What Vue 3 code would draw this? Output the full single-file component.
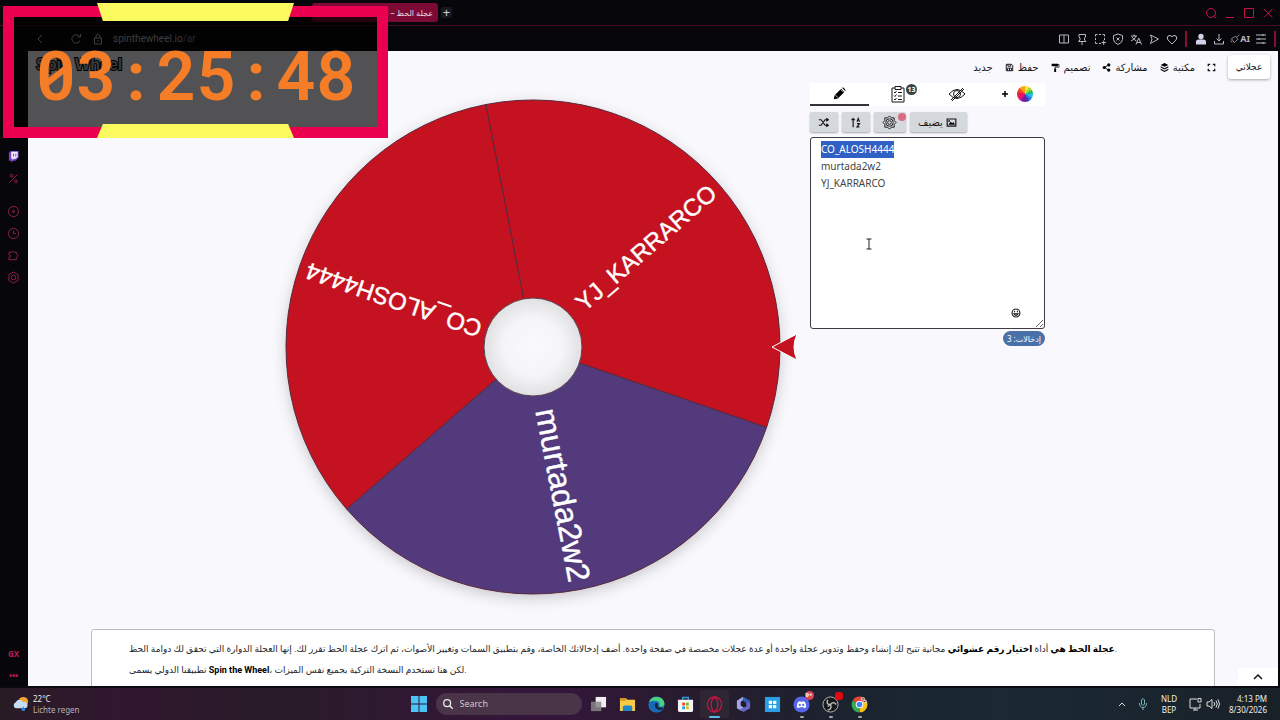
<script setup>
import { ref, onMounted } from 'vue'

const entries = ref('CO_ALOSH4444\nmurtada2w2\nYJ_KARRARCO')
const box = ref(null)
onMounted(() => {
  box.value.focus()
  box.value.setSelectionRange(0, 12)
})

const slices = [
  { name: 'YJ_KARRARCO', angle: -41, size: 24, color: '#c41220' },
  { name: 'murtada2w2', angle: 79, size: 32, color: '#523a7c' },
  { name: 'CO_ALOSH4444', angle: 199, size: 24, color: '#c41220' },
]
const R = 247
const point = (deg) => {
  const a = (deg * Math.PI) / 180
  return `${(R * Math.cos(a)).toFixed(2)} ${(R * Math.sin(a)).toFixed(2)}`
}
const slicePath = (mid) => `M0 0L${point(mid - 60)}A${R} ${R} 0 0 1 ${point(mid + 60)}Z`

const clock = '03:25:48'.split('')

const windowButtons = [
  { name: 'Search tabs', d: 'M11.5 7A4.5 4.5 0 1 1 7 2.500A4.5 4.5 0 0 1 11.5 7ZM9.5 10L12 12' },
  { name: 'Minimize', d: 'M3 11.500H11' },
  { name: 'Maximize', d: 'M2.500 2.500H11.500V11.500H2.500Z' },
  { name: 'Close', d: 'M3 3L11.500 11.500M11.500 3L3 11.500' },
]
const tools = [
  { name: 'Split view', d: 'M2.500 3H11.500V11H2.500ZM7 3V11' },
  { name: 'Pin', d: 'M4 2.500H10.500V5L9.500 6V8L11 9.500H3.500L5 8V6L4 5ZM7 9.500V13' },
  { name: 'Snapshot', d: 'M2.500 4.500V2.500H4.500M6 2.500H8M9.500 2.500H11.500V4.500M11.500 6V8M8 11.500H6M4.500 11.500H2.500V9.500M2.500 8V6M8.500 10.500H13M10.700 8.500V13' },
  { name: 'Ad blocker', d: 'M7 2L11.500 3.500V7.500Q11.500 10.500 7 12.500Q2.500 10.500 2.500 7.500V3.500ZM5.500 5.500L8.500 8.500M8.500 5.500L5.500 8.500' },
  { name: 'Translate', d: 'M2 4H8M5 2.500V4M3 5Q5 8 7.500 9M7 4Q6 7.500 2 9M7 12.500L9.700 6L12.500 12.500M8 10.500H11.500' },
  { name: 'Player', d: 'M3.500 3L11.500 7L3.500 11.500L5 7Z' },
  { name: 'Favourite', d: 'M7 12L3 8Q1.500 6 3 4Q5 2.500 7 4.700Q9 2.500 11 4Q12.500 6 11 8Z' },
]
const sideTop = [
  { name: 'Limiter', d: 'M3 11L11 3M3.500 4A1.500 1.500 0 1 0 6.500 4A1.500 1.500 0 1 0 3.500 4M8 10A1.500 1.500 0 1 0 11 10A1.500 1.500 0 1 0 8 10' },
]
const sideMain = [
  { name: 'Player', d: 'M12.500 7A5.500 5.500 0 1 1 1.500 7A5.500 5.500 0 1 1 12.500 7M6.500 5.500L8.500 7L6.500 8.500Z' },
  { name: 'History', d: 'M12.500 7A5.500 5.500 0 1 1 1.500 7A5.500 5.500 0 1 1 12.500 7M7 3.500V7H9.500' },
  { name: 'Extensions', d: 'M2 3.500H5Q6 1 8 3.500H10V5.500Q14 7 10 9V11.500H2V9Q6 7.500 2 6Z' },
  { name: 'Settings', d: 'M7 1L12 4V10L7 13L2 10V4ZM9.500 7A2.500 2.500 0 1 1 4.500 7A2.500 2.500 0 1 1 9.500 7' },
]
</script>

<template>
  <div class="desktop">
    <header class="browser">
      <div class="tabs-row">
        <div class="tab" dir="rtl">عجلة الحظ – أداة</div>
        <button class="new-tab" aria-label="New tab">+</button>
        <div class="window-buttons">
          <button v-for="b in windowButtons" :key="b.name" :aria-label="b.name">
            <svg viewBox="0 0 14 14"><path :d="b.d" /></svg>
          </button>
        </div>
      </div>
      <div class="address-row">
        <button class="dim" aria-label="Back"><svg viewBox="0 0 14 14"><path d="M9 3L5 7L9 11" /></svg></button>
        <span class="spacer-sm"></span>
        <button class="dim" aria-label="Reload"><svg viewBox="0 0 14 14"><path d="M11 8.500A4.200 4.200 0 1 1 10.500 4.500M11.500 2V5H8.500" /></svg></button>
        <button class="dim" aria-label="Site information"><svg viewBox="0 0 14 14"><path d="M3.500 6H10.500V12H3.500ZM5 6V4Q7 0 9 4V6M7 8V10" /></svg></button>
        <span class="url">spinthewheel.io<i>/ar</i></span>
        <div class="tools">
          <button v-for="t in tools" :key="t.name" :aria-label="t.name">
            <svg viewBox="0 0 14 14"><path :d="t.d" /></svg>
          </button>
          <span class="bar"></span>
          <button class="wide" aria-label="Profile"><svg viewBox="0 0 14 14"><path class="solid" d="M2 12.500V9.500Q2 7.500 4.500 7.500H9.500Q12 7.500 12 9.500V12.500ZM9.700 4.500A2.700 2.700 0 1 1 4.300 4.500A2.700 2.700 0 1 1 9.700 4.500" /></svg></button>
          <button aria-label="Downloads"><svg viewBox="0 0 14 14"><path d="M7 2V9M4.500 6.500L7 9L9.500 6.500M2.500 9V12H11.500V9" /></svg></button>
          <button class="ai" aria-label="AI"><svg viewBox="0 0 14 14"><path d="M8 3L2 6.500L6 12L11 7.500ZM10 4L13 1M1 9L3 12" /></svg>AI</button>
          <button aria-label="Easy setup"><svg viewBox="0 0 14 14"><path d="M2 3H12M2 7H12M2 11H12M9 2V4M5 6V8M9 10V12" /></svg></button>
          <span class="bar"></span>
        </div>
      </div>
    </header>

    <div class="middle">
      <aside class="side">
        <button aria-label="Twitch">
          <svg viewBox="0 0 14 14"><path class="tw" d="M2 3L4 1H12.500V8L9 11.500H7L4.500 13.500V11.500H2Z" /><path class="tw-in" d="M4.500 2H11.500V7.500L9.500 9.500H7.500L6 11V9.500H4.500Z" /><path class="tw-eye" d="M7 4V7M9.500 4V7" /></svg>
        </button>
        <button v-for="s in sideTop" :key="s.name" :aria-label="s.name"><svg viewBox="0 0 14 14"><path :d="s.d" /></svg></button>
        <span class="side-gap"></span>
        <button v-for="s in sideMain" :key="s.name" :aria-label="s.name"><svg viewBox="0 0 14 14"><path :d="s.d" /></svg></button>
        <span class="push"></span>
        <button class="gx">GX</button>
        <button class="gx">•••</button>
      </aside>

      <div class="page">
        <nav class="site-nav">
          <a href="#" class="logo">Spin Wheel</a>
          <div class="links">
            <a href="#">جديد</a>
            <a href="#"><svg viewBox="0 0 14 14"><path class="line2" d="M2 2H10L12 4V12H2ZM4.500 2V5H9V2M4 12V8H10V12M7 8V12" /></svg>حفظ</a>
            <a href="#"><svg viewBox="0 0 14 14"><path d="M1 1H11V2H13V7H7V9H8V14H5V8H6V6H12V3H11V5H1Z" /></svg>تصميم</a>
            <a href="#"><svg viewBox="0 0 14 14"><path class="line2" d="M10 3L4 7L10 11" /><circle cx="10.500" cy="3" r="2.500" /><circle cx="3.500" cy="7" r="2.500" /><circle cx="10.500" cy="11" r="2.500" /></svg>مشاركة</a>
            <a href="#"><svg viewBox="0 0 14 14"><path d="M7 0L13 3L7 6L1 3ZM1 5L7 8L13 5V7L7 10L1 7ZM1 9L7 12L13 9V11L7 14L1 11Z" /></svg>مكتبة</a>
            <a href="#" aria-label="Full screen"><svg viewBox="0 0 14 14"><path class="thick" d="M2 5V2H5M9 2H12V5M12 9V12H9M5 12H2V9" /></svg></a>
            <button class="mine">عجلاتي</button>
          </div>
        </nav>

        <main class="stage">
          <svg class="wheel" viewBox="-265 -264 530 530" role="img" aria-label="Wheel">
            <defs>
              <radialGradient id="hub" cx="50%" cy="50%" r="50%">
                <stop offset="0" stop-color="#fafafc" />
                <stop offset="0.6" stop-color="#f5f5f7" />
                <stop offset="1" stop-color="#e0e0e3" />
              </radialGradient>
              <filter id="soft" x="-10%" y="-10%" width="120%" height="120%"><feGaussianBlur stdDeviation="8" /></filter>
            </defs>
            <circle r="246" cy="4" fill="#000" opacity="0.22" filter="url(#soft)" />
            <path v-for="s in slices" :key="s.angle" :d="slicePath(s.angle)" :fill="s.color" stroke="#5a2a3c" stroke-width="1" />
            <text v-for="s in slices" :key="s.name" class="slice-name" x="239" :y="s.size * 0.31" :font-size="s.size" :transform="`rotate(${s.angle})`">{{ s.name }}</text>
            <circle r="49" fill="url(#hub)" stroke="#57434c" />
            <path d="M239 0L264 -13Q258 0 264 13Z" fill="#c41220" stroke="#fff" stroke-width="1" />
          </svg>

          <section class="panel">
            <div class="tabs">
              <button class="on" aria-label="Entries"><svg class="big" viewBox="0 0 16 16"><path d="M1 15L2 10L10 2L14 6L6 14ZM11 1Q12 0 13 1L15 3Q16 4 15 5Z" /><path class="cut" d="M9.500 3L13 6.500M3 10L6 13" /></svg></button>
              <button aria-label="Results">
                <span class="holder"><svg class="tall" viewBox="0 0 16 18"><path class="line" d="M5 3H2V17H14V3H11M5 1.500H11V4.500H5ZM4 7L5 8L6.500 6M8 7.500H12M4 10.500L5 11.500L6.500 9.500M8 11H12M4 14L5 15L6.500 13M8 14.500H12" /></svg><b class="count">13</b></span>
              </button>
              <button aria-label="Hide"><svg class="eye" viewBox="0 0 18 16"><path class="line" d="M1 8Q9 -1 17 8Q9 17 1 8ZM12.500 8A3.500 3.500 0 1 1 5.500 8A3.500 3.500 0 1 1 12.500 8M3 14L15 2M4 15L16 3" /></svg></button>
              <button class="add" aria-label="Add wheel">
                <svg viewBox="0 0 14 14"><path class="plus" d="M7 4V10M4 7H10" /></svg>
                <i class="rainbow"></i>
              </button>
            </div>

            <div class="actions">
              <button aria-label="Shuffle"><svg viewBox="0 0 14 14"><path class="line2" d="M1 3.500H4L9 10.500H12M1 10.500H4L9 3.500H12M10.500 1.500L13 3.500L10.500 5.500M10.500 8.500L13 10.500L10.500 12.500" /></svg></button>
              <button aria-label="Sort"><svg viewBox="0 0 14 14"><path class="line2" d="M4 13V2M2 4L4 2L6 4M9 6L10.500 2L12 6M9 8.500H12L9 12.500H12" /></svg></button>
              <button class="gear" aria-label="Advanced"><svg viewBox="0 0 16 16"><path class="line" d="M8 1L10 3L13 3V6L15 8L13 10V13H10L8 15L6 13H3V10L1 8L3 6V3H6ZM12 8A4 4 0 1 1 4 8A4 4 0 1 1 12 8M10 8A2 2 0 1 1 6 8A2 2 0 1 1 10 8" /></svg><i class="dot"></i></button>
              <button class="image">يضيف<svg viewBox="0 0 14 14"><path class="line2" d="M1.500 2.500H12.500V11.500H1.500Z" /><path d="M3 10L6 6L8 8L9.500 6.500L11.500 10ZM3 4H5V6H3Z" /></svg></button>
            </div>

            <div class="entry-box">
              <textarea ref="box" v-model="entries" aria-label="Entries" spellcheck="false"></textarea>
              <button class="emoji" aria-label="Emoji"><svg viewBox="0 0 14 14"><path class="line2" d="M12.500 7A5.500 5.500 0 1 1 1.500 7A5.500 5.500 0 1 1 12.500 7M4 8Q7 12.500 10 8ZM5 4V6M9 4V6" /></svg></button>
              <svg class="ibeam" viewBox="0 0 8 12"><path d="M1.500 1H6.500M4 1V11M1.500 11H6.500" /></svg>
            </div>
            <span class="total" dir="rtl">إدخالات: 3</span>
          </section>
        </main>

        <article class="info">
          <p><b>عجلة الحظ هي</b> أداة <b>اختيار رقم عشوائي</b> مجانية تتيح لك إنشاء وحفظ وتدوير عجلة واحدة أو عدة عجلات مخصصة في صفحة واحدة. أضف إدخالاتك الخاصة، وقم بتطبيق السمات وتغيير الأصوات، ثم اترك عجلة الحظ تقرر لك. إنها العجلة الدوارة التي تحقق لك دوامة الحظ.</p>
          <p>تطبيقنا الدولي يسمى <b class="latin">Spin the Wheel</b>، لكن هنا تستخدم النسخة التركية بجميع نفس الميزات.</p>
        </article>
        <button class="to-top" aria-label="Back to top"><svg viewBox="0 0 14 14"><path class="line2" d="M3 9L7 5L11 9" /></svg></button>
      </div>
    </div>

    <footer class="taskbar">
      <div class="weather">
        <svg viewBox="0 0 18 18"><circle cx="12" cy="6" r="5" fill="#f5a52b" /><path d="M4 13A3.500 3.500 0 0 1 4 6.500A4.500 4.500 0 0 1 12 6.500A3.400 3.400 0 0 1 14 13Z" fill="#c9dcf5" /><path d="M12 11L14 14A2 2 0 1 1 10 14Z" fill="#2d86dd" /></svg>
        <div><div>22°C</div><div class="muted">Lichte regen</div></div>
      </div>

      <div class="dock">
        <button class="start" aria-label="Start"><svg viewBox="0 0 16 16"><path fill="#4cc4f5" d="M0 0H7.500V7.500H0ZM8.500 0H16V7.500H8.500ZM0 8.500H7.500V16H0ZM8.500 8.500H16V16H8.500Z" /></svg></button>
        <label class="search"><svg viewBox="0 0 14 14"><circle cx="6" cy="6" r="4" /><path d="M9 9L12.500 12.500" /></svg><input type="text" placeholder="Search" aria-label="Search" /></label>
        <button class="app" aria-label="Task view"><svg viewBox="0 0 18 18"><rect x="6" y="1" width="11" height="11" fill="#f1eef2" /><rect x="1" y="6" width="11" height="10" fill="#88858a" opacity="0.85" /></svg></button>
        <button class="app" aria-label="Files"><svg viewBox="0 0 18 18"><path d="M1 2H7L9 4H17V16H1Z" fill="#f8cb46" /><path d="M1 2H7L8 5H1Z" fill="#d99520" /><path d="M4 16V12Q4 10 6 10H12Q14 10 14 12V16Z" fill="#2386c8" /></svg></button>
        <button class="app" aria-label="Edge"><svg viewBox="0 0 18 18"><circle cx="9" cy="9" r="8.500" fill="#168ad3" /><path d="M1 7A8.500 8.500 0 0 1 17.500 8Q17 12 12 11Q14 6 9 5Q4 4 1 7Z" fill="#4bd37b" /><path d="M1 7Q6 4 10 7Q6 8 7 12Q8 16 14 15Q9 19 4 15Q1 12 1 7Z" fill="#1766b7" /><path d="M9 7Q12 8 10.500 11Q13 13 16.500 11.500L15 15Q7 15 7 10Q7 8 9 7Z" fill="#1c2740" /></svg></button>
        <button class="app" aria-label="Store"><svg viewBox="0 0 18 18"><path d="M6 4V1.500H12V4" fill="none" stroke="#2d9cdb" stroke-width="1.500" /><path d="M1 4H17V15Q17 17 15 17H3Q1 17 1 15Z" fill="#f5f5f5" /><path d="M5.500 7H8.500V10H5.500Z" fill="#ed4b28" /><path d="M9.500 7H12.500V10H9.500Z" fill="#79b51c" /><path d="M5.500 11H8.500V14H5.500Z" fill="#1ca6ea" /><path d="M9.500 11H12.500V14H9.500Z" fill="#f8b71b" /></svg></button>
        <button class="app active" aria-label="Opera GX"><svg viewBox="0 0 18 18"><ellipse cx="9" cy="9" rx="7.500" ry="8" fill="none" stroke="#d01347" stroke-width="1.300" /><ellipse cx="9" cy="9" rx="3.500" ry="7" fill="none" stroke="#d01347" stroke-width="1.300" /></svg></button>
        <button class="app" aria-label="Microsoft 365"><svg viewBox="0 0 18 18"><path d="M8 1L2 5V13L7 16L10 13L6 10V6L11 3Z" fill="#a4a5e5" /><path d="M9 1L16 5V9L11 7L8 4Z" fill="#345eb8" /><path d="M16 8V13L9 17L5 14L12 11V7Z" fill="#6a65ca" /></svg></button>
        <button class="app" aria-label="Windows app"><svg viewBox="0 0 18 18"><rect x="1" y="1" width="16" height="16" fill="#2aa0e3" /><path d="M5 5H8.500V8.500H5ZM9.500 5H13V8.500H9.500ZM5 9.500H8.500V13H5ZM9.500 9.500H13V13H9.500Z" fill="#eef8fe" /></svg></button>
        <button class="app run" aria-label="Discord"><svg viewBox="0 0 18 18"><circle cx="9" cy="9" r="8.500" fill="#5865e8" /><path d="M4 12Q4 8 5.500 6L8 5.500L8.500 6.300H9.500L10 5.500L12.500 6Q14 8 14 12L12 13L11 12H7L6 13Z" fill="#fff" /><circle cx="7.200" cy="9.500" r="1.200" fill="#5865e8" /><circle cx="10.800" cy="9.500" r="1.200" fill="#5865e8" /></svg><b class="badge">9+</b></button>
        <button class="app run" aria-label="OBS"><svg viewBox="0 0 18 18"><circle cx="9" cy="9" r="8" fill="#171819" stroke="#bcbdc0" /><path d="M9 9Q4 9 6 4M9 9Q12 5 15 9M9 9Q11 14 6 15M9 9L6 11" fill="none" stroke="#bcbdc0" stroke-width="1.500" /></svg><i class="rec"></i></button>
        <button class="app run" aria-label="Chrome"><svg viewBox="0 0 18 18"><path d="M9 9L1.800 4.800A8.300 8.300 0 0 1 16.200 4.800Z" fill="#ea4335" /><path d="M9 9L16.200 4.800A8.300 8.300 0 0 1 9 17.300Z" fill="#fbc116" /><path d="M9 9V17.300A8.300 8.300 0 0 1 1.800 4.800Z" fill="#34a853" /><circle cx="9" cy="9" r="4" fill="#fff" /><circle cx="9" cy="9" r="3" fill="#4285f4" /><path d="M11 2H14V5H16V7H13V4H11Z" fill="#222938" stroke="#fff" stroke-width="0.800" /></svg></button>
      </div>

      <div class="tray">
        <svg viewBox="0 0 14 14"><path d="M4 9L7 6L10 9" /></svg>
        <svg class="mic" viewBox="0 0 14 14"><path d="M5.500 3Q7 0 8.500 3V7Q7 10 5.500 7ZM3.500 6Q3.500 10.500 7 10.500Q10.500 10.500 10.500 6M7 10.500V13" /></svg>
        <div class="lang"><div>NLD</div><div>BEP</div></div>
        <svg viewBox="0 0 14 14"><path d="M9 2H2V11H12V7M10 1.500H13V5H10ZM5 13H10M7 11V13" /></svg>
        <svg class="vol" viewBox="0 0 14 14"><path d="M1 5H3L6 2.500V11.500L3 9H1ZM8 5Q9.500 7 8 9M10 3.500Q12.500 7 10 10.500M12 2.500Q15 7 12 11.500" /></svg>
        <div class="when"><div>4:13 PM</div><div>8/30/2026</div></div>
      </div>
    </footer>

    <div class="timer" role="timer">
      <i class="clip top"></i>
      <i class="clip bottom"></i>
      <div class="digits"><span v-for="(c, i) in clock" :key="i" :class="{ zero: c === '0', colon: c === ':' }">{{ c }}</span></div>
    </div>
  </div>
</template>

<style>
body { margin: 0; background: #07070b; }
</style>

<style scoped>
* { box-sizing: border-box; }
.desktop { position: relative; display: flex; flex-direction: column; height: 100vh; overflow: hidden; background: #07070b; font-family: "Noto Sans", "DejaVu Sans", sans-serif; }
button { display: flex; align-items: center; justify-content: center; padding: 0; border: 0; background: none; color: inherit; font: inherit; }
a { color: inherit; text-decoration: none; }
svg { width: 14px; height: 14px; flex: none; }

.browser { flex: none; color: #b9b7c2; }
.tabs-row { display: flex; align-items: center; height: 26px; padding-left: 312px; border-bottom: 1px solid #4c0a25; }
.tab { width: 126px; height: 19px; padding: 0 5px; border-radius: 3px; background: #7d0935; color: #eadbe1; font-size: 8px; line-height: 19px; white-space: nowrap; overflow: hidden; }
.new-tab { width: 11px; height: 11px; margin-left: 3px; border-radius: 2px; background: #181722; color: #cfcddb; font-size: 13px; line-height: 11px; }
.window-buttons { display: flex; gap: 5px; margin-left: auto; margin-right: 5px; }
.window-buttons path { fill: none; stroke: #c51349; stroke-width: 1; }
.address-row { display: flex; align-items: center; height: 25px; padding-left: 33px; padding-right: 4px; }
.address-row path { fill: none; stroke: #b9b7c2; stroke-width: 1; }
.address-row .solid { fill: #d3d0e8; stroke: none; }
.dim { width: 14px; margin-right: 8px; }
.spacer-sm { width: 14px; }
.url { color: #b5b5b8; font-family: Roboto, sans-serif; font-size: 10px; }
.url i { color: #77777b; font-style: normal; }
.tools { display: flex; align-items: center; gap: 4px; margin-left: auto; }
.bar { width: 2px; height: 16px; margin-left: 2px; background: #8b0c37; }
.tools .wide { margin-left: 3px; }
.ai { font-size: 9px; font-weight: 700; }
.ai svg { width: 10px; height: 10px; }

.middle { display: flex; flex: 1; min-height: 0; padding-right: 2px; }
.side { display: flex; flex: none; flex-direction: column; align-items: center; width: 28px; padding-top: 94px; padding-right: 1px; }
.side button { height: 22px; }
.side path { fill: none; stroke: #982049; stroke-width: 1; }
.side svg { width: 13px; height: 13px; }
.side .tw { fill: #7542c9; stroke: none; }
.side .tw-in { fill: #efe8ff; stroke: none; }
.side .tw-eye { stroke: #7542c9; }
.side-gap { height: 11px; }
.push { flex: 1; }
.side .gx { color: #c3174d; font-size: 8px; font-weight: 700; }

.page { position: relative; flex: 1; min-width: 0; overflow: hidden; background: #f9f8fd; color: #151518; }
.site-nav { display: flex; align-items: center; justify-content: space-between; height: 32px; padding: 0 8px; }
.logo { padding-bottom: 4px; color: #aaa; font-family: "Liberation Sans", sans-serif; font-size: 16px; font-weight: 700; -webkit-text-stroke: 2px #000; paint-order: stroke fill; }
.links { display: flex; align-items: center; gap: 12px; font-size: 10px; line-height: 14px; white-space: nowrap; }
.links a { display: flex; align-items: center; gap: 4px; height: 18px; }
.links svg { width: 9px; height: 9px; }
.line { fill: none; stroke: currentColor; stroke-width: 1; }
.line2 { fill: none; stroke: currentColor; stroke-width: 1.5; }
.thick { fill: none; stroke: currentColor; stroke-width: 2; }
.mine { height: 24px; width: 42px; border-radius: 3px; background: #fff; box-shadow: 0 1px 3px #0005; font-size: 9px; }

.stage { display: flex; justify-content: center; gap: 12px; padding-left: 7px; }
.wheel { width: 530px; height: 530px; overflow: visible; }
.slice-name { fill: #fff; stroke: #fff; stroke-width: 0.4px; font-family: "Liberation Sans", sans-serif; text-anchor: end; }
.panel { display: flex; flex-direction: column; width: 235px; }
.tabs { display: grid; grid-template-columns: repeat(4, 1fr); height: 23px; background: #fff; }
.tabs button { border-bottom: 2px solid transparent; }
.tabs .on { border-color: #333; }
.tabs .cut { stroke: #fff; stroke-width: 1; }
.big { width: 13px; height: 13px; }
.tall { width: 16px; height: 18px; }
.eye { width: 18px; height: 16px; }
.holder { position: relative; display: flex; }
.count { position: absolute; left: 16px; top: -1px; width: 11px; height: 11px; border-radius: 50%; background: #344247; color: #fff; font-size: 7px; line-height: 11px; text-align: center; }
.add { gap: 5px; }
.plus { fill: none; stroke: #000; stroke-width: 1.5; }
.rainbow { width: 16px; height: 16px; border-radius: 50%; background: conic-gradient(#fbe726 0 30deg, #a5d62f 30deg 60deg, #20bd75 60deg 90deg, #20bce4 90deg 120deg, #2476de 120deg 150deg, #4430ba 150deg 180deg, #8a1697 180deg 210deg, #d61489 210deg 240deg, #ee154d 240deg 285deg, #ef4a23 285deg 320deg, #f9a01b 320deg); }
.actions { display: flex; gap: 4px; margin-top: 6px; }
.actions button { position: relative; width: 28px; height: 20px; padding-right: 2px; border-radius: 2px; background: #d5d8dc; box-shadow: 0 1px 2px #0005; font-size: 10px; }
.actions svg { width: 11px; height: 11px; }
.actions .gear { width: 32px; }
.actions .gear svg { width: 15px; height: 15px; }
.dot { position: absolute; right: 0; top: 1px; width: 8px; height: 8px; border-radius: 50%; background: #d86c82; }
.actions .image { width: 57px; gap: 3px; }
.entry-box { position: relative; margin-top: 5px; }
textarea { display: block; width: 100%; height: 192px; padding: 3px 10px; border: 1px solid #3c3c42; border-radius: 3px; outline: 0; background: #fff; color: #444; font: 10px/17px "Noto Sans", sans-serif; resize: vertical; }
textarea::selection { background: #2f60c4; color: #fff; }
.emoji { position: absolute; right: 24px; bottom: 11px; }
.emoji svg { width: 10px; height: 10px; }
.ibeam { position: absolute; left: 55px; top: 101px; width: 8px; height: 12px; }
.ibeam path { fill: none; stroke: #222; stroke-width: 1; }
.total { align-self: flex-end; margin-top: 2px; padding: 0 4px; border-radius: 8px; background: #4a70a8; color: #fff; font-size: 8px; line-height: 15px; }

.info { height: 120px; margin: 16px 63px 0; padding: 9px 37px; border: 1px solid #bdbdc1; border-radius: 3px; background: #fff; color: #262629; font-family: Roboto, "DejaVu Sans", sans-serif; font-size: 9px; line-height: 21px; }
.info p { margin: 0; white-space: nowrap; }
.info b { color: #000; }
.to-top { position: absolute; right: 0; bottom: 0; width: 40px; height: 18px; background: #fff; }

.taskbar { display: grid; grid-template-columns: 1fr auto 1fr; align-items: center; flex: none; height: 34px; border-top: 2px solid #0c0a11; background: linear-gradient(90deg, #281b25 0%, #31172f 9%, #291c29 22%, #35153b 42%, #271c2e 54%, #19242f 68%, #1b2935 78%, #192128 100%); color: #eee; font-family: "Noto Sans", sans-serif; font-size: 8px; line-height: 11px; }
.weather { display: flex; align-items: center; gap: 4px; padding-left: 12px; }
.weather svg { width: 17px; height: 17px; }
.muted { color: #b8b0b8; }
.dock { display: flex; align-items: center; padding-right: 2px; }
.start { width: 28px; margin-right: 3px; }
.start svg { width: 16px; height: 16px; }
.search { display: flex; align-items: center; gap: 6px; width: 146px; height: 22px; margin-right: 2px; padding-left: 6px; border-radius: 11px; background: #493448; }
.search svg { width: 12px; height: 12px; fill: none; stroke: #eee; stroke-width: 1.5; }
.search input { flex: 1; min-width: 0; padding: 0; border: 0; outline: 0; background: none; color: #ddd; font: 9px/14px "Noto Sans", sans-serif; }
.search input::placeholder { color: #cfc6cf; opacity: 1; }
.app { position: relative; width: 29px; height: 28px; border-radius: 3px; }
.app svg { width: 17px; height: 17px; }
.active { background: #2e2733; }
.active::after, .run::after { content: ""; position: absolute; bottom: 0; left: 13px; width: 4px; height: 2px; border-radius: 1px; background: #a5a6a9; }
.active::after { left: 9px; width: 11px; background: #5fb9e8; }
.badge { position: absolute; right: 2px; top: 1px; width: 9px; height: 9px; border-radius: 50%; background: #dc4354; color: #fff; font-size: 6px; line-height: 9px; text-align: center; }
.rec { position: absolute; right: 2px; top: 2px; width: 8px; height: 8px; border-radius: 3px; background: #e40611; }
.tray { display: flex; align-items: center; justify-content: flex-end; padding-right: 13px; }
.tray svg { fill: none; stroke: #ddd; stroke-width: 1; }
.tray .mic { margin-left: 7px; stroke: #78b8bd; }
.lang { margin: 0 11px; text-align: center; }
.tray .vol { margin-left: 4px; }
.when { margin-left: 9px; text-align: right; }

.timer { position: absolute; left: 3px; top: 6px; width: 385px; height: 132px; border: 11px solid #eb0050; background: #000000ab; }
.clip { position: absolute; left: 83px; width: 197px; background: #fbfb5f; }
.top { top: -14px; height: 18px; clip-path: polygon(0 0, 100% 0, 97% 100%, 3% 100%); }
.bottom { bottom: -11px; height: 14px; clip-path: polygon(3% 0, 97% 0, 100% 100%, 0 100%); }
.digits { display: grid; grid-template-columns: repeat(8, 40px); margin: 18px 0 0 22px; color: #f57d27; font: 600 68px/84px Roboto, sans-serif; text-align: center; }
.digits span { position: relative; }
.colon { font-weight: 700; }
.zero::after { content: ""; position: absolute; left: 9px; top: 38px; width: 22px; height: 6px; background: currentColor; rotate: -38deg; }
</style>
